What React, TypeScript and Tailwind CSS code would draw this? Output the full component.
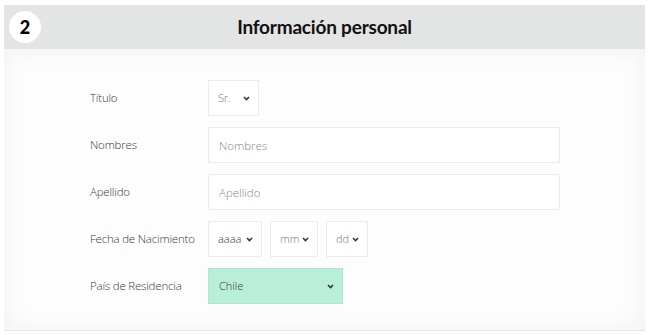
import React from 'react';

const Chevron = () => (
  <svg width="7" height="5" viewBox="0 0 7 5" className="shrink-0">
    <path d="M1 1 L3.5 3.6 L6 1" fill="none" stroke="#333" strokeWidth="1.5" />
  </svg>
);

const FakeSelect = ({ value, width, muted, green }: { value: string; width: string; muted?: boolean; green?: boolean }) => (
  <div
    className={`${width} h-[36px] flex items-center justify-between pr-[8px] border ${
      green ? 'bg-[#b9eed8] border-[#b0e6cf] pl-[10px]' : 'bg-white border-[#ececec] pl-[9px]'
    }`}
  >
    <span className={`text-[11px] font-light ${muted ? 'text-[#777]' : 'text-[#333]'}`}>{value}</span>
    <Chevron />
  </div>
);

const Row = ({ label, children }: { label: string; children: React.ReactNode }) => (
  <div className="flex items-center h-[36px]">
    <div className="w-[118px] text-[11.5px] font-light text-[#3a3a3a] tracking-[-0.2px]">{label}</div>
    {children}
  </div>
);

export default function App() {
  return (
    <div className="w-[650px] h-[335px] bg-white pt-[5px] px-[4px]" style={{ fontFamily: '"Open Sans", sans-serif' }}>
      <div className="w-[641px] border-b border-[#e8e8e8]">
        <div className="h-[44px] bg-[#e3e4e4] relative flex items-center justify-center">
          <div className="absolute left-[5px] top-[6px] w-[32px] h-[32px] rounded-full bg-white flex items-center justify-center">
            <span className="text-[18px] font-black text-black" style={{ fontFamily: 'Lato, sans-serif' }}>2</span>
          </div>
          <h1 className="text-[19px] font-bold text-[#111] tracking-[-0.2px]" style={{ fontFamily: 'Lato, sans-serif' }}>
            Información personal
          </h1>
        </div>
        <div className="bg-[#fdfdfd] shadow-[inset_0_0_24px_rgba(0,0,0,0.05)] pt-[31px] pb-[26px] pl-[86px] flex flex-col gap-[11px]">
          <Row label="Título">
            <FakeSelect value="Sr." width="w-[51px]" muted />
          </Row>
          <Row label="Nombres">
            <input
              placeholder="Nombres"
              className="w-[352px] h-[36px] bg-white border border-[#ececec] px-[10px] text-[11.5px] font-light text-[#444] placeholder:text-[#888] outline-none"
            />
          </Row>
          <Row label="Apellido">
            <input
              placeholder="Apellido"
              className="w-[352px] h-[36px] bg-white border border-[#ececec] px-[10px] text-[11.5px] font-light text-[#444] placeholder:text-[#888] outline-none"
            />
          </Row>
          <Row label="Fecha de Nacimiento">
            <div className="flex gap-[8px]">
              <FakeSelect value="aaaa" width="w-[54px]" />
              <FakeSelect value="mm" width="w-[48px]" muted />
              <FakeSelect value="dd" width="w-[42px]" muted />
            </div>
          </Row>
          <Row label="País de Residencia">
            <FakeSelect value="Chile" width="w-[135px]" green />
          </Row>
        </div>
      </div>
    </div>
  );
}
